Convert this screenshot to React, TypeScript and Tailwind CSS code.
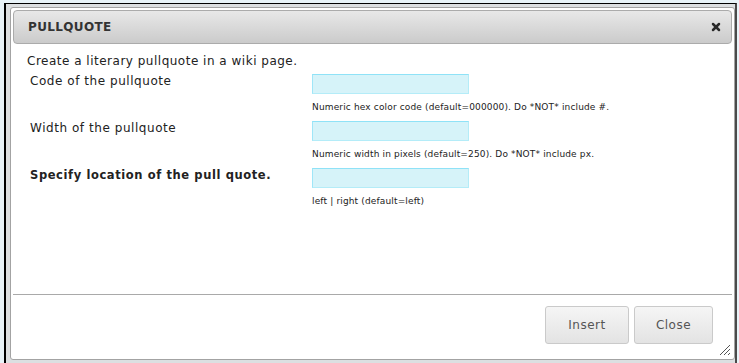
import { X } from 'lucide-react'

const font = { fontFamily: '"DejaVu Sans", Verdana, sans-serif' }

const fields = [
  { label: 'Code of the pullquote', help: 'Numeric hex color code (default=000000). Do *NOT* include #.', bold: false },
  { label: 'Width of the pullquote', help: 'Numeric width in pixels (default=250). Do *NOT* include px.', bold: false },
  { label: 'Specify location of the pull quote.', help: 'left | right (default=left)', bold: true },
]

function FieldRow({ label, help, bold }: { label: string; help: string; bold: boolean }) {
  return (
    <div className="grid h-[47px] grid-cols-[282px_1fr]">
      <div
        className={
          bold
            ? 'pt-[1px] text-[11.5px] font-bold leading-[15px] tracking-[0.6px] text-[#222]'
            : 'pt-[1px] text-[12px] leading-[15px] tracking-[0.55px] text-[#222]'
        }
      >
        {label}
      </div>
      <div className="flex flex-col">
        <div className="mt-[1px] h-[20px] w-[157px] border border-[#b4ecf8] border-t-[#8fe2f7] border-l-[#9fe6f8] bg-[#d6f3f9]" />
        <div className="mt-[7px] text-[9px] leading-[12px] tracking-[0.15px] text-[#222]">{help}</div>
      </div>
    </div>
  )
}

function ResizeGrip() {
  return (
    <svg width="12" height="12" viewBox="0 0 12 12" className="absolute bottom-[1px] right-[1px]">
      <line x1="1" y1="11" x2="11" y2="1" stroke="#555" strokeWidth="1" />
      <line x1="5" y1="11" x2="11" y2="5" stroke="#555" strokeWidth="1" />
      <line x1="9" y1="11" x2="11" y2="9" stroke="#555" strokeWidth="1" />
    </svg>
  )
}

export default function App() {
  return (
    <div className="h-[363px] w-[739px] overflow-hidden bg-[#e8f3f8]" style={font}>
      <div className="ml-[4px] mt-[3px] h-[360px] w-[733px] border-l-2 border-r-2 border-t border-l-black border-r-[#4a4a4a] border-t-black bg-[#dcdfe1] pl-[4px] pt-[3px]">
        <div className="flex h-[353px] w-[725px] flex-col rounded-[3px] border border-[#a3a3a3] bg-white p-[2px]">
          <div className="flex h-[34px] shrink-0 items-center justify-between rounded-[4px] border border-[#ababab] bg-gradient-to-b from-[#e8e8e8] to-[#cbcbcb] pl-[14px] pr-[9px]">
            <span className="text-[12px] font-bold leading-none tracking-[0.35px] text-[#333]">PULLQUOTE</span>
            <X size={12} strokeWidth={5} className="text-[#2a2a2a]" />
          </div>
          <div className="flex-1 pl-[14px] pt-[10px]">
            <div className="text-[12px] leading-[15px] tracking-[0.5px] text-[#222]">
              Create a literary pullquote in a wiki page.
            </div>
            <div className="mt-[4px] pl-[3px]">
              {fields.map((f) => (
                <FieldRow key={f.label} {...f} />
              ))}
            </div>
          </div>
          <div className="relative flex h-[63px] shrink-0 items-start justify-end gap-[5px] border-t border-[#a9a9a9] pr-[19px] pt-[11px]">
            <button className="h-[38px] w-[84px] rounded-[3px] border border-[#cacaca] bg-gradient-to-b from-[#f5f5f5] to-[#e3e3e3] text-[12px] tracking-[0.5px] text-[#555]">
              Insert
            </button>
            <button className="h-[38px] w-[79px] rounded-[3px] border border-[#cacaca] bg-gradient-to-b from-[#f5f5f5] to-[#e3e3e3] text-[12px] tracking-[0.5px] text-[#555]">
              Close
            </button>
            <ResizeGrip />
          </div>
        </div>
      </div>
    </div>
  )
}
